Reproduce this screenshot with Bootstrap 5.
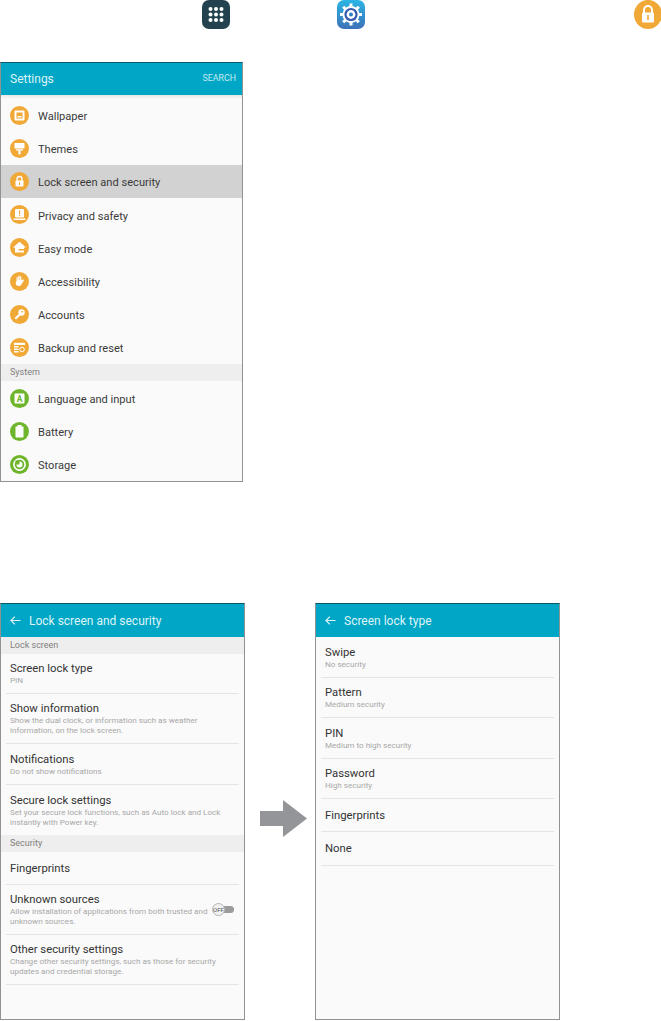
<!DOCTYPE html>
<html lang="en">
<head>
  <meta charset="UTF-8" />
  <meta name="viewport" content="width=device-width, initial-scale=1.0" />
  <title>Lock screen and security</title>
  <link href="https://cdn.jsdelivr.net/npm/bootstrap@5.3.0/dist/css/bootstrap.min.css" rel="stylesheet">
  <style>
    body {
      background-color: #fff;
      font-family: Roboto, "Liberation Sans", sans-serif;
      color: #222;
      width: 661px;
      height: 1021px;
      overflow: hidden;
    }
    .top-strip { height: 29px; margin-bottom: 33px; padding-left: 202px; }
    .app-icon { width: 28px; height: 29px; flex: none; display: block; }
    .gap-gear { margin-left: 107px; }
    .gap-lock { margin-left: 269px; }

    .phone {
      background: #fafafa;
      border: 1px solid #8f9394;
      border-top-color: #0b5a6c;
      box-sizing: border-box;
    }
    .phone-settings { width: 243px; height: 419.500px; }
    .phone-lock { width: 245px; height: 417px; }
    .phone-type { width: 245px; height: 417px; }
    .screens { margin-top: 121.500px; }

    .app-bar {
      background: #00a6c5;
      color: #dff4f8;
      height: 32px;
      padding: 0 6px 0 9px;
      font-size: 12px;
    }
    .screens .app-bar { height: 33px; }
    .search-link { font-size: 8.800px; color: #c4ebf3; }
    .back-arrow { width: 11px; height: 9px; margin-right: 8px; flex: none; }
    .shade { height: 4px; background: linear-gradient(#e6e6e6, #fafafa); }

    .menu-row { height: 33.100px; padding-left: 9px; font-size: 11.100px; color: #3a3a3a; }
    .menu-row svg { width: 19px; height: 19px; margin-right: 9px; flex: none; }
    .menu-label { padding-top: 4px; }
    .menu-row.picked { background: #d2d2d2; }
    .after-sect { margin-top: 1px; }
    .sect-title {
      background: #eee;
      color: #808080;
      font-size: 9px;
      height: 17px;
      padding-left: 9px;
      line-height: 17px;
    }

    .opt-row { margin: 0 5px; padding-left: 4px; padding-top: 1px; border-bottom: 1px solid #e4e4e4; }
    .opt-row.no-line { border-bottom: 0; }
    .tall-33 { height: 33px; }
    .tall-34 { height: 34px; }
    .tall-40 { height: 40px; }
    .tall-41 { height: 41px; }
    .tall-50 { height: 50px; }
    .opt-name { font-size: 11.300px; line-height: 14px; color: #333; }
    .opt-sub { font-size: 8.100px; line-height: 9.700px; color: #a8a8a8; white-space: nowrap; }

    .off-switch { right: 5px; top: 18px; width: 22px; height: 13px; }
    .off-track { left: 9px; top: 3px; width: 13px; height: 7px; background: #9b9b9b; border-radius: 4px; }
    .off-knob {
      left: 0; top: 0; width: 13px; height: 13px;
      background: #f1f1f1;
      border: 1px solid #b5b5b5;
      border-radius: 50%;
      font-size: 6px;
      line-height: 11px;
      text-align: center;
      color: #555;
    }

    .go-arrow { width: 47px; height: 37px; margin: 197px 8px 0 15px; flex: none; }
  </style>
</head>
<body class="m-0">

  <div class="top-strip d-flex">
    <svg class="app-icon" viewBox="0 0 28 29">
      <rect width="28" height="29" rx="7" fill="#23424f"/>
      <g fill="#fff">
        <circle cx="8.500" cy="9" r="2"/><circle cx="14" cy="9" r="2"/><circle cx="19.500" cy="9" r="2"/>
        <circle cx="8.500" cy="14.500" r="2"/><circle cx="14" cy="14.500" r="2"/><circle cx="19.500" cy="14.500" r="2"/>
        <circle cx="8.500" cy="20" r="2"/><circle cx="14" cy="20" r="2"/><circle cx="19.500" cy="20" r="2"/>
      </g>
    </svg>
    <svg class="app-icon gap-gear" viewBox="0 0 28 29">
      <defs><linearGradient id="gearBg" x1="0" y1="0" x2="0" y2="1"><stop offset="0" stop-color="#2cb4e4"/><stop offset="1" stop-color="#3d72b8"/></linearGradient></defs>
      <rect width="28" height="29" rx="7" fill="url(#gearBg)"/>
      <circle cx="14" cy="14.500" r="8.500" fill="#fff"/>
      <g stroke="#fff" stroke-width="3">
        <path d="M14 3.500v22M3 14.500h22M6.200 6.700l15.600 15.600M21.800 6.700L6.200 22.300"/>
      </g>
      <circle cx="14" cy="14.500" r="6.600" fill="#3358ae"/>
      <circle cx="14" cy="14.500" r="4.400" fill="#fff"/>
      <circle cx="14" cy="14.500" r="2" fill="#2f7cc4"/>
    </svg>
    <svg class="app-icon gap-lock" viewBox="0 0 28 29">
      <ellipse cx="14" cy="14.500" rx="14" ry="14.500" fill="#f0a836"/>
      <path d="M10 13v-3a4 4 0 0 1 8 0v3" fill="none" stroke="#fff" stroke-width="2"/>
      <rect x="8" y="12.500" width="12" height="10" rx="1.200" fill="#fff"/>
      <rect x="13.200" y="15" width="1.600" height="5" fill="#f0a836"/>
    </svg>
  </div>

  <div class="phone phone-settings">
    <div class="app-bar d-flex align-items-center justify-content-between">
      <span>Settings</span>
      <span class="search-link">SEARCH</span>
    </div>
    <div class="shade"></div>

    <div class="menu-row d-flex align-items-center">
      <svg viewBox="0 0 19 19"><circle cx="9.500" cy="9.500" r="9.500" fill="#f0a836"/><rect x="4.500" y="4.500" width="10" height="10" rx="1" fill="#fff"/><rect x="6.500" y="6.500" width="6" height="6" fill="#f0a836"/><rect x="7.500" y="10" width="4" height="1.500" fill="#fff"/></svg>
      <span class="menu-label">Wallpaper</span>
    </div>
    <div class="menu-row d-flex align-items-center">
      <svg viewBox="0 0 19 19"><circle cx="9.500" cy="9.500" r="9.500" fill="#f0a836"/><rect x="4.500" y="4" width="10" height="5.500" fill="#fff"/><rect x="6" y="10.200" width="7" height="1.300" fill="#fff"/><path d="M8.200 11.500h2.600l-.4 4h-1.800z" fill="#fff"/></svg>
      <span class="menu-label">Themes</span>
    </div>
    <div class="menu-row picked d-flex align-items-center">
      <svg viewBox="0 0 19 19"><circle cx="9.500" cy="9.500" r="9.500" fill="#f0a836"/><path d="M7 9V7a2.500 2.500 0 0 1 5 0v2" fill="none" stroke="#fff" stroke-width="1.300"/><rect x="5.500" y="8.500" width="8" height="6" rx=".8" fill="#fff"/><rect x="9" y="10" width="1" height="3" fill="#f0a836"/></svg>
      <span class="menu-label">Lock screen and security</span>
    </div>
    <div class="menu-row d-flex align-items-center">
      <svg viewBox="0 0 19 19"><circle cx="9.500" cy="9.500" r="9.500" fill="#f0a836"/><rect x="5" y="4" width="9" height="8.500" rx="1" fill="#fff"/><rect x="3.500" y="13.500" width="12" height="1.500" fill="#fff"/><rect x="9" y="5.500" width="1.200" height="3.500" fill="#f0a836"/><rect x="9" y="9.800" width="1.200" height="1.300" fill="#f0a836"/></svg>
      <span class="menu-label">Privacy and safety</span>
    </div>
    <div class="menu-row d-flex align-items-center">
      <svg viewBox="0 0 19 19"><circle cx="9.500" cy="9.500" r="9.500" fill="#f0a836"/><path d="M9.500 3.800L3 9.500h2v5h9v-5h2z" fill="#fff"/><rect x="8.500" y="11" width="5.500" height="1.500" fill="#f0a836"/></svg>
      <span class="menu-label">Easy mode</span>
    </div>
    <div class="menu-row d-flex align-items-center">
      <svg viewBox="0 0 19 19"><circle cx="9.500" cy="9.500" r="9.500" fill="#f0a836"/><path d="M6.500 9V5.500a.7.700 0 0 1 1.300 0V8h.4V4.300a.7.700 0 0 1 1.400 0V8h.4V4.800a.7.700 0 0 1 1.300 0V8.500l1.400-1a.8.800 0 0 1 1 1.200l-2.300 3.800c-.6 1-1.400 1.500-2.700 1.500-2 0-3-1.300-3-3z" fill="#fff"/></svg>
      <span class="menu-label">Accessibility</span>
    </div>
    <div class="menu-row d-flex align-items-center">
      <svg viewBox="0 0 19 19"><circle cx="9.500" cy="9.500" r="9.500" fill="#f0a836"/><circle cx="11.500" cy="7.500" r="3.200" fill="#fff"/><path d="M9.800 8.200l1.200 1.200-4.500 4.800-1.500-.2-.1-1.400z" fill="#fff"/><circle cx="12.300" cy="6.700" r=".9" fill="#f0a836"/></svg>
      <span class="menu-label">Accounts</span>
    </div>
    <div class="menu-row d-flex align-items-center">
      <svg viewBox="0 0 19 19"><circle cx="9.500" cy="9.500" r="9.500" fill="#f0a836"/><rect x="4" y="4.800" width="11" height="2.200" fill="#fff"/><rect x="4" y="8" width="4.500" height="1.500" fill="#fff"/><rect x="4" y="10.500" width="4.500" height="1.500" fill="#fff"/><rect x="4" y="13" width="4.500" height="1.500" fill="#fff"/><circle cx="12" cy="11.500" r="2.300" fill="none" stroke="#fff" stroke-width="1"/></svg>
      <span class="menu-label">Backup and reset</span>
    </div>
    <div class="sect-title">System</div>
    <div class="menu-row after-sect d-flex align-items-center">
      <svg viewBox="0 0 19 19"><circle cx="9.500" cy="9.500" r="9.500" fill="#6fb52c"/><rect x="4.500" y="4.500" width="10" height="10" rx="1" fill="#fff"/><text x="9.500" y="12.500" font-size="8.500" font-weight="700" text-anchor="middle" fill="#6fb52c" font-family="Roboto, sans-serif">A</text></svg>
      <span class="menu-label">Language and input</span>
    </div>
    <div class="menu-row d-flex align-items-center">
      <svg viewBox="0 0 19 19"><circle cx="9.500" cy="9.500" r="9.500" fill="#6fb52c"/><rect x="7.500" y="3" width="4" height="2" fill="#fff"/><rect x="5.500" y="4.500" width="8" height="11" rx=".8" fill="#fff"/></svg>
      <span class="menu-label">Battery</span>
    </div>
    <div class="menu-row d-flex align-items-center">
      <svg viewBox="0 0 19 19"><circle cx="9.500" cy="9.500" r="9.500" fill="#6fb52c"/><circle cx="9.500" cy="9.500" r="5.600" fill="none" stroke="#fff" stroke-width="1.600"/><circle cx="9.500" cy="9.500" r="3" fill="#fff"/><path d="M9.500 9.500V5.500H5.500V9.500z" fill="#6fb52c"/></svg>
      <span class="menu-label">Storage</span>
    </div>
  </div>

  <div class="screens d-flex">
    <div class="phone phone-lock">
      <div class="app-bar d-flex align-items-center">
        <svg class="back-arrow" viewBox="0 0 11 9"><path d="M10.500 4.500H1M4.800 .7L1 4.500l3.800 3.800" fill="none" stroke="#dff4f8" stroke-width="1.200"/></svg>
        <span>Lock screen and security</span>
      </div>
      <div class="sect-title">Lock screen</div>
      <div class="opt-row tall-40 d-flex flex-column justify-content-center">
        <div class="opt-name">Screen lock type</div>
        <div class="opt-sub">PIN</div>
      </div>
      <div class="opt-row tall-50 d-flex flex-column justify-content-center">
        <div class="opt-name">Show information</div>
        <div class="opt-sub">Show the dual clock, or information such as weather<br>information, on the lock screen.</div>
      </div>
      <div class="opt-row tall-41 d-flex flex-column justify-content-center">
        <div class="opt-name">Notifications</div>
        <div class="opt-sub">Do not show notifications</div>
      </div>
      <div class="opt-row no-line tall-50 d-flex flex-column justify-content-center">
        <div class="opt-name">Secure lock settings</div>
        <div class="opt-sub">Set your secure lock functions, such as Auto lock and Lock<br>instantly with Power key.</div>
      </div>
      <div class="sect-title">Security</div>
      <div class="opt-row tall-33 d-flex flex-column justify-content-center">
        <div class="opt-name">Fingerprints</div>
      </div>
      <div class="opt-row tall-50 d-flex flex-column justify-content-center position-relative">
        <div class="opt-name">Unknown sources</div>
        <div class="opt-sub">Allow installation of applications from both trusted and<br>unknown sources.</div>
        <div class="off-switch position-absolute">
          <div class="off-track position-absolute"></div>
          <div class="off-knob position-absolute">OFF</div>
        </div>
      </div>
      <div class="opt-row tall-50 d-flex flex-column justify-content-center">
        <div class="opt-name">Other security settings</div>
        <div class="opt-sub">Change other security settings, such as those for security<br>updates and credential storage.</div>
      </div>
    </div>

    <svg class="go-arrow" viewBox="0 0 47 37"><path d="M0 11h23V0l24 18.500L23 37V26H0z" fill="#939598"/></svg>

    <div class="phone phone-type">
      <div class="app-bar d-flex align-items-center">
        <svg class="back-arrow" viewBox="0 0 11 9"><path d="M10.500 4.500H1M4.800 .7L1 4.500l3.800 3.800" fill="none" stroke="#dff4f8" stroke-width="1.200"/></svg>
        <span>Screen lock type</span>
      </div>
      <div class="opt-row tall-41 d-flex flex-column justify-content-center">
        <div class="opt-name">Swipe</div>
        <div class="opt-sub">No security</div>
      </div>
      <div class="opt-row tall-40 d-flex flex-column justify-content-center">
        <div class="opt-name">Pattern</div>
        <div class="opt-sub">Medium security</div>
      </div>
      <div class="opt-row tall-41 d-flex flex-column justify-content-center">
        <div class="opt-name">PIN</div>
        <div class="opt-sub">Medium to high security</div>
      </div>
      <div class="opt-row tall-40 d-flex flex-column justify-content-center">
        <div class="opt-name">Password</div>
        <div class="opt-sub">High security</div>
      </div>
      <div class="opt-row tall-33 d-flex flex-column justify-content-center">
        <div class="opt-name">Fingerprints</div>
      </div>
      <div class="opt-row tall-34 d-flex flex-column justify-content-center">
        <div class="opt-name">None</div>
      </div>
    </div>
  </div>

  <script src="https://cdn.jsdelivr.net/npm/bootstrap@5.3.0/dist/js/bootstrap.bundle.min.js"></script>
</body>
</html>
